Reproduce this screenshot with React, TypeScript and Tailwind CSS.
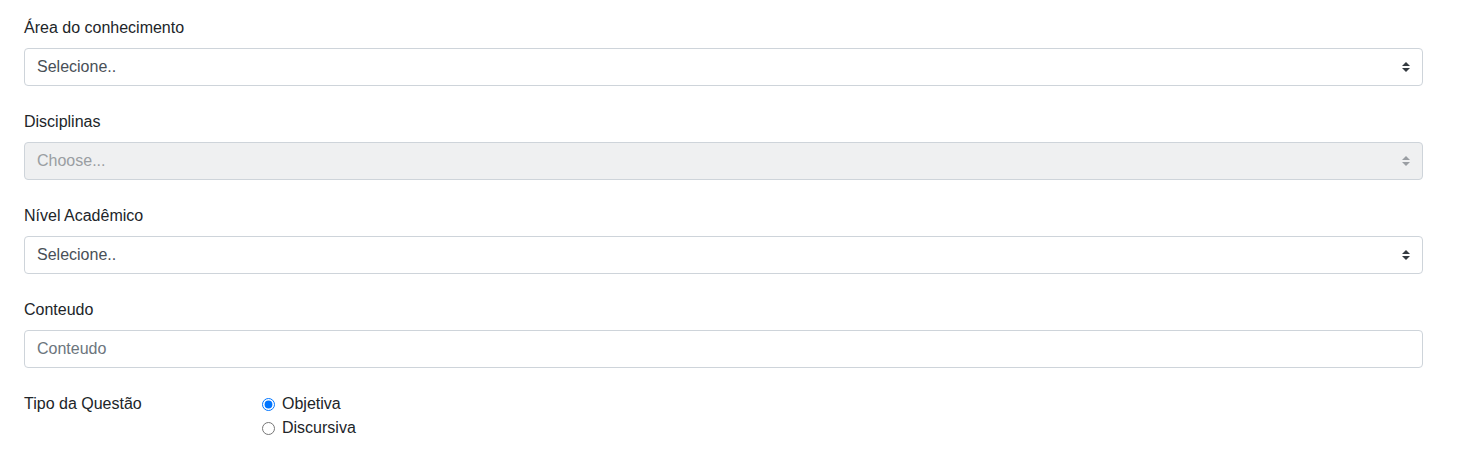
import React from 'react';

// seta dupla do custom-select (bootstrap 4)
const SelectArrow = ({ color = '#343a40' }: { color?: string }) => (
  <svg width="8" height="10" viewBox="0 0 4 5" className="shrink-0">
    <path d="M2 0L0 2h4zm0 5L0 3h4z" fill={color} />
  </svg>
);

type SelectProps = { value: string; disabled?: boolean };

function FakeSelect({ value, disabled }: SelectProps) {
  return (
    <div
      className={`flex items-center justify-between h-[38px] pl-3 pr-3 border border-[#ced4da] rounded ${
        disabled ? 'bg-[#eff0f1] text-[#9a9ea2]' : 'bg-white text-[#495057]'
      }`}
    >
      <span className="leading-6">{value}</span>
      <SelectArrow color={disabled ? '#9a9ea3' : '#343a40'} />
    </div>
  );
}

export default function App() {
  return (
    <div
      className="bg-white w-[1461px] h-[466px] pl-6 pr-[38px] pt-4 text-[16px] text-[#212529]"
      style={{ fontFamily: '"Liberation Sans", Arial, sans-serif' }}
    >
      {/* Área do conhecimento */}
      <div className="mb-6">
        <label className="block leading-6 mb-2">Área do conhecimento</label>
        <FakeSelect value="Selecione.." />
      </div>

      {/* Disciplinas */}
      <div className="mb-6">
        <label className="block leading-6 mb-2">Disciplinas</label>
        <FakeSelect value="Choose..." disabled />
      </div>

      {/* Nível Acadêmico */}
      <div className="mb-6">
        <label className="block leading-6 mb-2">Nível Acadêmico</label>
        <FakeSelect value="Selecione.." />
      </div>

      {/* Conteudo */}
      <div className="mb-6">
        <label className="block leading-6 mb-2">Conteudo</label>
        <input
          type="text"
          placeholder="Conteudo"
          className="block w-full h-[38px] px-3 border border-[#ced4da] rounded bg-white text-[#495057] placeholder:text-[#6c757d] outline-none"
        />
      </div>

      {/* Tipo da Questão */}
      <div className="flex">
        <div className="w-[238px] leading-6">Tipo da Questão</div>
        <div className="flex flex-col">
          <label className="flex items-center leading-6">
            <input type="radio" name="tipo" defaultChecked className="w-[13px] h-[13px] m-0 mr-[7px] accent-[#0075ff]" />
            Objetiva
          </label>
          <label className="flex items-center leading-6">
            <input type="radio" name="tipo" className="w-[13px] h-[13px] m-0 mr-[7px]" />
            Discursiva
          </label>
        </div>
      </div>
    </div>
  );
}
